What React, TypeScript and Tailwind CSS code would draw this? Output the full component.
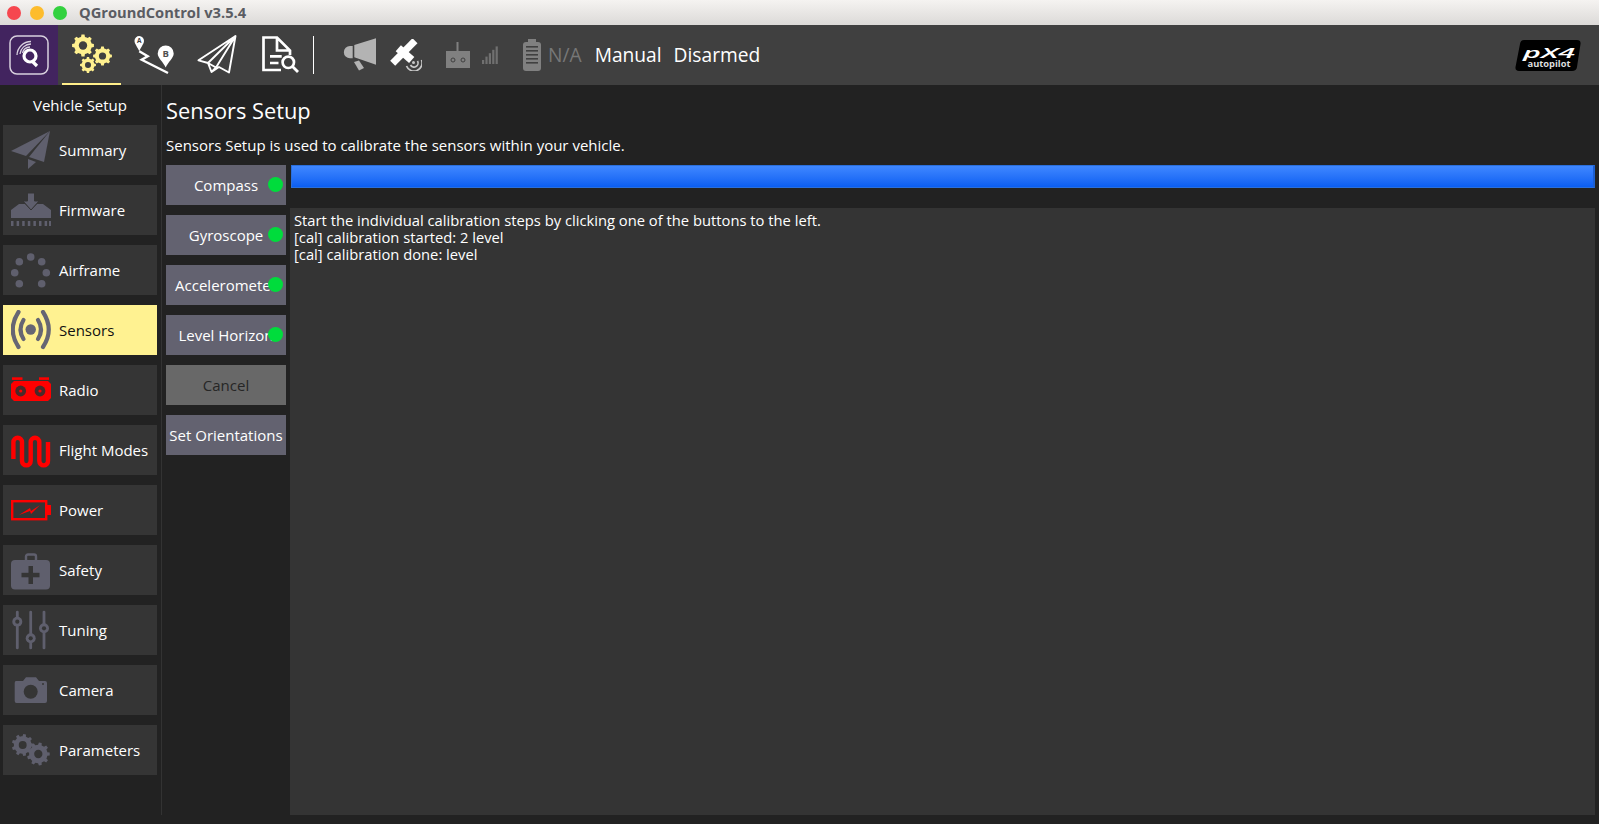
import React from 'react';

const gearPath = (cx: number, cy: number, r: number, teeth: number) => {
  const pts: string[] = [];
  const inner = r * 0.8;
  const step = (Math.PI * 2) / teeth;
  for (let i = 0; i < teeth; i++) {
    const a = i * step;
    const w = step * 0.22;
    const p = (rad: number, ang: number) =>
      `${(cx + rad * Math.cos(ang)).toFixed(2)},${(cy + rad * Math.sin(ang)).toFixed(2)}`;
    pts.push(p(inner, a - step / 2 + w * 0.2), p(inner, a - w * 1.3), p(r, a - w * 0.8), p(r, a + w * 0.8), p(inner, a + w * 1.3));
  }
  return pts.join(' ');
};

const Gear = ({ cx, cy, r, teeth = 8, color, hole, holeSize = 0.36 }: { cx: number; cy: number; r: number; teeth?: number; color: string; hole: string; holeSize?: number }) => (
  <g>
    <polygon points={gearPath(cx, cy, r, teeth)} fill={color} />
    <circle cx={cx} cy={cy} r={r * holeSize} fill={hole} />
  </g>
);

const GRAY = '#5f5f6d';
const BTN = '#353535';

const SummaryIcon = () => (
  <g fill={GRAY}>
    <polygon points="0,21 39,1 15,26" />
    <polygon points="39,1 33,32 18,27" />
    <polygon points="17,29 25,32 17,39" />
  </g>
);

const FirmwareIcon = () => (
  <g fill={GRAY}>
    <path d="M0 20 L8 14 H14 L20 20 L26 14 H32 L40 20 V28 H0 Z" />
    <polygon points="16.5,3 23.5,3 23.5,11 28,11 20,20 12,11 16.5,11" stroke={BTN} strokeWidth={1} />
    {[0, 5.6, 11.2, 16.8, 22.4, 28, 33.6, 38].map((x) => (
      <rect key={x} x={x} y={31} width={2.5} height={5} />
    ))}
  </g>
);

const AirframeIcon = () => (
  <g fill={GRAY}>
    {[[19.7, 7], [30.7, 11.7], [35.3, 22.7], [30.7, 33.7], [8.3, 33.7], [3.7, 22.7], [8.3, 11.7]].map(([x, y]) => (
      <circle key={x * y} cx={x} cy={y} r={3.8} />
    ))}
  </g>
);

const SensorsIcon = () => (
  <g fill="none" stroke="#666673" strokeWidth={4.2} strokeLinecap="round">
    <circle cx={19.7} cy={19.5} r={5.2} fill="#666673" stroke="none" />
    <path d="M12.5 10 Q6.5 19.5 12.5 29" />
    <path d="M27 10 Q33 19.5 27 29" />
    <path d="M7.5 2 Q-4 19.5 7.5 37" />
    <path d="M32 2 Q43.5 19.5 32 37" />
  </g>
);

const RadioIcon = () => (
  <g>
    <rect x={1} y={7.3} width={10.5} height={2.6} fill="#f00" />
    <rect x={28} y={7.3} width={10} height={2.6} fill="#f00" />
    <path d="M3 11 H37 L40 14 V28 L37 31 H3 L0 28 V14 Z" fill="#f00" />
    <circle cx={9.7} cy={21} r={5.4} fill="#4a2a2a" />
    <circle cx={9.7} cy={21} r={1.6} fill="#f00" />
    <circle cx={29} cy={21} r={5.4} fill="#4a2a2a" />
    <circle cx={29} cy={21} r={1.6} fill="#f00" />
  </g>
);

const FlightIcon = () => (
  <path
    d="M2.4 29 V12 A4.3 4.3 0 0 1 11 12 V31 A4.35 4.35 0 0 0 19.7 31 V12 A4.3 4.3 0 0 1 28.3 12 V31 A4.35 4.35 0 0 0 37 31 V12"
    fill="none"
    stroke="#f00"
    strokeWidth={4.4}
  />
);

const PowerIcon = () => (
  <g>
    <rect x={1.2} y={11.2} width={34} height={18} fill="none" stroke="#f00" strokeWidth={2.4} />
    <rect x={36} y={15} width={4} height={10} fill="#f00" />
    <polygon points="8,25 19,18 20,21 29,15 20,24 19,21" fill="#f00" />
  </g>
);

const SafetyIcon = () => (
  <g>
    <rect x={15} y={4.5} width={10} height={7} rx={2} fill="none" stroke={GRAY} strokeWidth={2.4} />
    <rect x={0} y={10} width={39} height={29.5} rx={4} fill={GRAY} />
    <rect x={17.5} y={16} width={4.5} height={18} fill={BTN} />
    <rect x={10.5} y={22.8} width={18} height={4.5} fill={BTN} />
  </g>
);

const TuningIcon = () => (
  <g>
    {[[6.3, 11.7], [19.7, 28.3], [33, 18.3]].map(([x, y]) => (
      <g key={x}>
        <rect x={x - 1.4} y={0.7} width={2.8} height={38.6} rx={1.4} fill={GRAY} />
        <circle cx={x} cy={y} r={5} fill={GRAY} />
        <circle cx={x} cy={y} r={2.1} fill={BTN} />
      </g>
    ))}
  </g>
);

const CameraIcon = () => (
  <g>
    <path d="M5 11 H12 L15 7.3 H25 L28 11 H34 Q36 11 36 13 V31 Q36 33 34 33 H5.5 Q3.7 33 3.7 31 V13 Q3.7 11 5 11 Z" fill={GRAY} />
    <circle cx={19.7} cy={21.7} r={7} fill={BTN} />
    <circle cx={32} cy={14} r={1} fill={BTN} />
  </g>
);

const ParametersIcon = () => (
  <g>
    <Gear cx={11.7} cy={15} r={11} teeth={9} color={GRAY} hole={BTN} />
    <Gear cx={27.3} cy={24} r={11.5} teeth={9} color={GRAY} hole={BTN} />
  </g>
);

const items = [
  { label: 'Summary', icon: <SummaryIcon /> },
  { label: 'Firmware', icon: <FirmwareIcon /> },
  { label: 'Airframe', icon: <AirframeIcon /> },
  { label: 'Sensors', icon: <SensorsIcon />, active: true },
  { label: 'Radio', icon: <RadioIcon /> },
  { label: 'Flight Modes', icon: <FlightIcon /> },
  { label: 'Power', icon: <PowerIcon /> },
  { label: 'Safety', icon: <SafetyIcon /> },
  { label: 'Tuning', icon: <TuningIcon /> },
  { label: 'Camera', icon: <CameraIcon /> },
  { label: 'Parameters', icon: <ParametersIcon /> },
];

const sensorButtons = [
  { label: 'Compass', done: true },
  { label: 'Gyroscope', done: true },
  { label: 'Accelerometer', done: true },
  { label: 'Level Horizon', done: true },
  { label: 'Cancel', disabled: true },
  { label: 'Set Orientations' },
];

const TitleBar = () => (
  <div className="h-[25px] shrink-0 flex items-center bg-gradient-to-b from-[#f5f3f1] to-[#dcdad8] px-[7px]">
    <span className="w-[14px] h-[14px] rounded-full bg-[#f6474f]" />
    <span className="w-[14px] h-[14px] rounded-full bg-[#fdbc2c] ml-[9px]" />
    <span className="w-[14px] h-[14px] rounded-full bg-[#33d13f] ml-[9px]" />
    <span className="ml-[12px] text-[14.7px] font-bold text-[#5a5c62]">QGroundControl v3.5.4</span>
  </div>
);

const ToolBar = () => (
  <div className="h-[60px] shrink-0 bg-[#404040] flex items-center">
    <div className="w-[58px] h-full bg-[#42245f] flex items-center justify-center">
      <svg width="40" height="40" viewBox="0 0 40 40">
        <rect x="1" y="1" width="38" height="38" rx="7" fill="none" stroke="#d8d0de" strokeWidth="1.5" />
        <g fill="none" stroke="#fff">
          <circle cx="21" cy="21" r="6" strokeWidth="3.2" />
          <path d="M23 26 L28 31" strokeWidth="3.2" />
          <path d="M11 19 A11 11 0 0 1 22 9" strokeWidth="1.3" stroke="#d8d0de" />
          <path d="M8 20 A14 14 0 0 1 22 6.5" strokeWidth="1.3" stroke="#d8d0de" />
          <path d="M13.5 18 A8 8 0 0 1 21 12" strokeWidth="1.3" stroke="#d8d0de" />
        </g>
      </svg>
    </div>
    <div className="ml-[4px] w-[59px] h-full flex items-center justify-center border-b-2 border-[#ffee8a] box-border">
      <svg width="40" height="40" viewBox="0 0 40 40">
        <Gear cx={11} cy={11.5} r={11} color="#fff08f" hole="#404040" holeSize={0.38} />
        <Gear cx={30.5} cy={22} r={9.5} color="#fff08f" hole="#404040" holeSize={0.38} />
        <Gear cx={16} cy={31} r={8} color="#fff08f" hole="#404040" holeSize={0.38} />
      </svg>
    </div>
    <div className="ml-[13px] w-[42px] flex justify-center">
      <svg width="42" height="42" viewBox="0 0 42 42">
        <path d="M5.3 2 A4.8 4.8 0 0 1 10 6.8 C10 10 7 13 5.3 17.3 C3.5 13 .5 10 .5 6.8 A4.8 4.8 0 0 1 5.3 2 Z" fill="#fff" />
        <text x="5.3" y="9.3" fontSize="6.5" fontWeight="700" textAnchor="middle" fill="#404040" fontFamily="Open Sans">A</text>
        <path d="M5.3 17.3 L13.7 22.3 L7.7 25.7 L34 39" fill="none" stroke="#fff" strokeWidth="2.4" />
        <path d="M31.7 11.5 A8 8 0 0 1 39.7 19.5 C39.7 24 34 28 31.7 33.5 C29.4 28 23.7 24 23.7 19.5 A8 8 0 0 1 31.7 11.5 Z" fill="#fff" />
        <text x="31.7" y="23" fontSize="9.5" fontWeight="700" textAnchor="middle" fill="#505050" fontFamily="Open Sans">B</text>
      </svg>
    </div>
    <div className="ml-[21px] w-[41px]">
      <svg width="41" height="40" viewBox="0 0 41 40">
        <path d="M1.5 25.3 L38.5 1 L32 37.5 L22 32 L14.5 37 L11 28 Z M11 28 L38.5 1 M11 28 L19 32.5 L38.5 1 M14.5 37 L19 32.5" fill="none" stroke="#fff" strokeWidth="1.9" strokeLinejoin="round" />
      </svg>
    </div>
    <div className="ml-[23px] w-[38px]">
      <svg width="38" height="40" viewBox="0 0 38 40">
        <path d="M20 35 H2.5 V2.5 H16 L29 15.5 V20 M16 2.5 V15.5 H29" fill="none" stroke="#fff" strokeWidth="2.7" />
        <path d="M9 21.3 H20.7 M9 28 H17.5" stroke="#fff" strokeWidth="2.7" />
        <circle cx="27.3" cy="27.3" r="5.7" fill="none" stroke="#fff" strokeWidth="2.7" />
        <path d="M31.5 31.5 L37 37" stroke="#fff" strokeWidth="2.9" />
      </svg>
    </div>
    <div className="ml-[14px] w-px h-[38px] bg-white" />
    <div className="ml-[29px] w-[34px]">
      <svg width="34" height="34" viewBox="0 0 34 34">
        <path d="M7 8 H9.7 V20.3 H7 A6.15 6.15 0 0 1 7 8 Z M11.3 7 L33 0.3 V26.7 L11.3 19.3 Z" fill="#b3b3b3" />
        <polygon points="11,24 16,22.5 21,30 16,32.5" fill="#b3b3b3" />
      </svg>
    </div>
    <div className="ml-[13px] w-[32px]">
      <svg width="32" height="32" viewBox="0 0 32 32">
        <path d="M25 1.7 L2.7 24.3" stroke="#fff" strokeWidth="7" />
        <path d="M8.3 9.3 L21.7 21" stroke="#fff" strokeWidth="8" />
        <path d="M16.5 27 A8 8 0 0 0 31.5 21" stroke="#c8c8c8" strokeWidth="1.7" fill="none" />
        <path d="M20.5 26 A4 4 0 0 0 27.5 22" stroke="#c8c8c8" strokeWidth="1.7" fill="none" />
        <circle cx="23.5" cy="23.5" r="1.5" fill="#c8c8c8" />
      </svg>
    </div>
    <div className="ml-[24px] w-[24px]">
      <svg width="24" height="27" viewBox="0 0 24 27">
        <rect x="10.5" y="0" width="2" height="10" fill="#808080" />
        <rect x="0" y="9" width="24" height="17" fill="#808080" />
        <circle cx="7" cy="18" r="2" fill="none" stroke="#404040" strokeWidth="1" />
        <circle cx="17" cy="18" r="2" fill="none" stroke="#404040" strokeWidth="1" />
      </svg>
    </div>
    <div className="ml-[12px] w-[16px]">
      <svg width="16" height="18" viewBox="0 0 16 18">
        {[0, 3.4, 6.8, 10.2, 13.6].map((x, i) => (
          <rect key={x} x={x} y={14 - i * 3.4} width="2.2" height={4 + i * 3.4} fill="#707070" />
        ))}
      </svg>
    </div>
    <div className="ml-[24px] w-[20px]">
      <svg width="20" height="32" viewBox="0 0 20 32">
        <rect x="6" y="0" width="8" height="3" fill="#808080" />
        <rect x="1" y="3" width="18" height="29" rx="3" fill="#808080" />
        {[7, 11, 15, 19, 23].map((y) => (
          <rect key={y} x="4" y={y} width="12" height="1.6" fill="#404040" />
        ))}
      </svg>
    </div>
    <span className="ml-[6px] text-[19.2px] text-[#777777]">N/A</span>
    <span className="ml-[13px] text-[19.2px] text-white">Manual</span>
    <span className="ml-[12px] text-[19.2px] text-white">Disarmed</span>
    <div className="ml-auto mr-[18px]">
      <svg width="66" height="33" viewBox="0 0 66 33">
        <path d="M9 1 H62 Q66 1 65.5 5 L62 28 Q61.5 32 57 32 H4 Q0 32 .5 28 L5 5 Q5.5 1 9 1 Z" fill="#000" />
        <text x="34" y="18.5" fontSize="15" fontWeight="600" fontStyle="italic" textAnchor="middle" textLength="52" lengthAdjust="spacingAndGlyphs" fill="#fff" fontFamily="Open Sans">pX4</text>
        <text x="34" y="27.5" fontSize="8.5" fontWeight="700" textAnchor="middle" textLength="43" lengthAdjust="spacingAndGlyphs" fill="#ddd" fontFamily="Open Sans">autopilot</text>
      </svg>
    </div>
  </div>
);

const Sidebar = () => (
  <div className="w-[162px] shrink-0 mb-[9px] border-r border-[#333333] pl-[3px] pr-[4px]">
    <div className="h-[40px] flex items-center justify-center text-[15px] text-white">Vehicle Setup</div>
    <div className="flex flex-col gap-[10px]">
      {items.map((item) => (
        <div
          key={item.label}
          className={`h-[50px] flex items-center pl-[8px] text-[15px] ${item.active ? 'bg-[#fff291] text-[#111111]' : 'bg-[#353535] text-white'}`}
        >
          <svg width="40" height="40" viewBox="0 0 40 40" className="shrink-0">
            {item.icon}
          </svg>
          <span className="ml-[8px] whitespace-nowrap">{item.label}</span>
        </div>
      ))}
    </div>
  </div>
);

const SensorsPanel = () => (
  <div className="flex-1 min-w-0 flex flex-col pl-[4px] pr-[4px] pb-[9px]">
    <h1 className="h-[49px] pt-[9px] text-[21.8px] leading-[34px] text-white">Sensors Setup</h1>
    <p className="h-[31px] text-[15px] leading-[22px] text-white">Sensors Setup is used to calibrate the sensors within your vehicle.</p>
    <div className="flex-1 min-h-0 flex gap-[4px]">
      <div className="w-[120px] shrink-0 flex flex-col gap-[10px]">
        {sensorButtons.map((b) => (
          <div
            key={b.label}
            className={`relative h-[40px] flex items-center justify-center overflow-hidden whitespace-nowrap text-[15px] ${b.disabled ? 'bg-[#686868] text-[#262626]' : 'bg-[#636270] text-white'}`}
          >
            {b.label}
            {b.done && <span className="absolute right-[3px] top-[12px] w-[15px] h-[15px] rounded-full bg-[#00dc3c]" />}
          </div>
        ))}
      </div>
      <div className="flex-1 min-w-0 flex flex-col">
        <div className="h-[23px] ml-px shrink-0 border border-[#2a6fdc] border-r-2 border-r-[#1d5fd0] bg-gradient-to-b from-[#3f87ff] to-[#0a5ef2]" />
        <div className="flex-1 mt-[20px] bg-[#343434] px-[4px] pt-[4px] text-[14.75px] leading-[17px] text-white">
          <div>Start the individual calibration steps by clicking one of the buttons to the left.</div>
          <div>[cal] calibration started: 2 level</div>
          <div>[cal] calibration done: level</div>
        </div>
      </div>
    </div>
  </div>
);

export default function App() {
  return (
    <div className="w-[1599px] h-[824px] flex flex-col overflow-hidden bg-[#222222] font-['Open_Sans',sans-serif]">
      <TitleBar />
      <ToolBar />
      <div className="flex-1 min-h-0 flex">
        <Sidebar />
        <SensorsPanel />
      </div>
    </div>
  );
}
